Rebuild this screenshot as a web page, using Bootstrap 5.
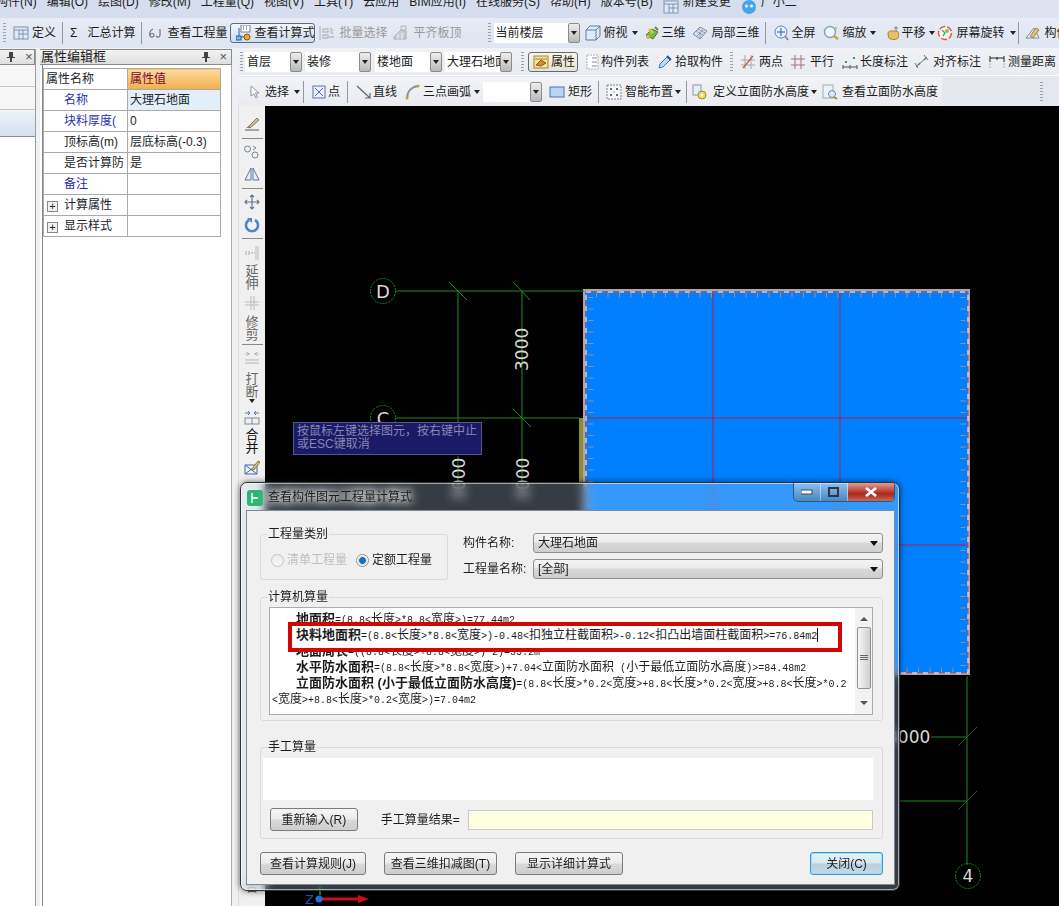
<!DOCTYPE html>
<html lang="zh-CN">
<head>
<meta charset="UTF-8">
<title>查看构件图元工程量计算式</title>
<link href="https://cdn.jsdelivr.net/npm/bootstrap@5.3.3/dist/css/bootstrap.min.css" rel="stylesheet">
<style>
html, body { height: 906px; overflow: hidden; margin: 0; }
body, .btn, .form-control { font-family: "Liberation Sans", "Noto Sans CJK SC", sans-serif; font-size: 12px; color: #1c1c1c; }
.app { position: relative; width: 1059px; height: 906px; overflow: hidden; background: #eef0f4; }
.ic { width: 16px; height: 16px; flex: none; display: block; }
.g1 { margin-left: 1px; } .g2 { margin-left: 2px; } .g3 { margin-left: 3px; } .g4 { margin-left: 4px; } .g5 { margin-left: 5px; }
.g6 { margin-left: 6px; } .g7 { margin-left: 7px; } .g8 { margin-left: 8px; } .g9 { margin-left: 9px; } .g10 { margin-left: 10px; } .g26 { margin-left: 26px; }
.t1 { margin-top: 1px; } .t3 { margin-top: 3px; } .t4 { margin-top: 4px; } .t5 { margin-top: 5px; } .t6 { margin-top: 6px; } .t7 { margin-top: 7px; } .t10 { margin-top: 10px; }

.menu-row { height: 18px; overflow: hidden; background: linear-gradient(90deg, #d6ddee 0, #d6ddee 800px, #dde3f0 800px); }
.menu-in { margin: -5px 0 0 -4px; gap: 10px; line-height: 14px; white-space: nowrap; }
.tool-row { display: flex; align-items: center; white-space: nowrap; overflow: hidden; line-height: 14px; }
.tool-one { height: 30px; background: linear-gradient(#e6ebf5, #dfe5f1); }
.grip { width: 3px; height: 20px; flex: none; background: repeating-linear-gradient(#9aa3b2 0 1px, transparent 1px 3px); }
.vsep { width: 1px; height: 22px; flex: none; background: #8e98a8; }
.caret-dn { width: 0; height: 0; flex: none; border: 3px solid transparent; border-top: 4px solid #222; border-bottom: 0; }
.off { color: #9a9a9a; }
.act-btn { display: flex; align-items: center; height: 20px; border: 1px solid #5c6b80; border-radius: 3px; background: linear-gradient(#f2f6fb, #cfdcec); flex: none; }
.calc-act { width: 85px; padding-left: 5px; }
.calc-act span { margin-left: 2px; }
.prop-act { width: 50px; padding-left: 4px; background: linear-gradient(#fdf5e4, #e8e3d2); }
.prop-act span { margin-left: 2px; }
.pick { display: flex; height: 20px; flex: none; align-items: stretch; }
.pick-txt { background: #fff; padding: 3px 0 0 2px; overflow: hidden; flex: 1; }
.pick-arr { width: 12px; flex: none; display: flex; align-items: center; justify-content: center; background: linear-gradient(#eee, #b8b8b8); border: 1px solid #8b8b8b; border-radius: 2px; }
.pk-floor { width: 86px; }
.pk57 { width: 57px; } .pk66 { width: 66px; } .pk67 { width: 67px; } .pk59 { width: 59px; }

.work { display: flex; height: 858px; }
.left-col { width: 238px; flex: none; display: flex; padding-top: 1px; background: #eef0f4; }
.pane-a { width: 36px; flex: none; background: #fff; border-right: 1px solid #9b9b9b; }
.pane-title { height: 16px; display: flex; align-items: center; background: linear-gradient(#f3f3f3, #dedede); border: 1px solid #8a8a8a; border-left: 0; }
.pane-title .ttl { font-size: 13px; padding-left: 1px; }
.pin { width: 8px; height: 10px; flex: none; }
.xmark { font-size: 13px; color: #555; line-height: 10px; }
.tree-r { height: 22px; border-bottom: 1px solid #c8c8c8; background: #f6f6f6; }
.tree-r + .tree-r { height: 23px; }
.tree-sel { height: 27px; border-bottom: 1px solid #8f8f8f; background: linear-gradient(#eef3fa, #d4e1f1); }
.pane-b { width: 192px; flex: none; margin-left: 4px; background: #fff; }
.pane-body { margin-left: 2px; padding-top: 3px; border-left: 1px solid #888; height: 842px; border-right: 1px solid #aaa; }
.prop-tb { width: 178px; margin: 0; table-layout: fixed; border-color: #a9a9a9; --bs-table-bg: transparent; }
.prop-tb .c-a { width: 84px; }
.prop-tb td { padding: 0 0 0 2px; height: 21px; vertical-align: middle; white-space: nowrap; overflow: hidden; border: 1px solid #a9a9a9; font-size: 12px; line-height: 14px; }
.prop-tb .nm { padding-left: 20px; }
.prop-tb .lnk { color: #1f2fb0; }
.prop-tb .hd-v { background: linear-gradient(#fbdc9f, #f3ad4b); color: #7a0a35; }
.prop-tb .cur { background: #e2effa; }
.prop-tb .ex { padding-left: 3px; height: 19px; }
.plus { display: inline-block; width: 11px; height: 11px; margin-right: 6px; vertical-align: -1px; border: 1px solid #888; text-align: center; line-height: 8px; font-size: 11px; background: #f2f2f2; }

.right-col { flex: 1; min-width: 0; display: flex; flex-direction: column; }
.tool-two { height: 28px; padding-top: 1px; background: linear-gradient(#f0f2f6, #e8ebf1); border-bottom: 1px solid #fff; }
.tool-three { height: 30px; padding-top: 1px; background: #e4e7ee; }
.band3 { display: flex; align-items: center; height: 100%; width: 704px; flex: none; background: linear-gradient(#f2f3f6, #e9ebf0); }
.view-row { flex: 1; display: flex; min-height: 0; }
.vert-tb { width: 27px; flex: none; display: flex; flex-direction: column; align-items: center; background: #f0f0f0; border-left: 1px solid #ddd; }
.vbar { width: 21px; height: 1px; flex: none; background: #8a8a8a; }
.vtxt { width: 14px; height: 26px; line-height: 13px; font-size: 13px; flex: none; text-align: center; color: #666; }
.vtxt.on { color: #111; }
.draw-wrap { flex: 1; background: #000; }
.draw-wrap svg { display: block; }

.float-tip { position: absolute; left: 293px; top: 422px; width: 189px; height: 33px; padding: 2px 3px; background: #1b1a66; border: 1px solid #55558f; color: #8787b4; font-size: 12px; line-height: 13px; white-space: nowrap; overflow: hidden; }

.dlg { position: absolute; left: 240px; top: 482px; width: 660px; height: 409px; padding: 0 4px 4px 5px; border: 1px solid #2e3338; border-radius: 7px; background: rgba(190, 215, 240, .28); backdrop-filter: blur(5px); box-shadow: inset 0 0 0 1px rgba(255, 255, 255, .55), 0 0 6px rgba(0, 0, 0, .6); }
.dlg-bar { height: 27px; display: flex; align-items: flex-start; }
.dlg-ttl { margin: 7px 0 0 5px; line-height: 14px; text-shadow: 0 0 6px #fff, 0 0 10px #fff, 0 0 14px #fff; }
.app-ic { width: 16px; height: 16px; margin: 7px 0 0 1px; flex: none; }
.cap-box { margin-left: auto; display: flex; height: 19px; border: 1px solid rgba(40, 60, 80, .7); border-top: 0; border-radius: 0 0 5px 5px; overflow: hidden; }
.cap-b { display: flex; align-items: center; justify-content: center; border-right: 1px solid rgba(255, 255, 255, .45); background: linear-gradient(rgba(210, 225, 240, .55), rgba(90, 120, 150, .55)); }
.cap-min, .cap-max { width: 27px; }
.cap-x { width: 46px; border-right: 0; background: linear-gradient(#dd9e94, #b93c2c 50%, #a8281a 60%, #c66a5a); }
.dlg-body { height: 375px; background: #f0f0f0; border: 1px solid #7d8a97; padding: 16px 11px 0 13px; }
.dlg-group { border: 1px solid #dadada; border-radius: 3px; margin: 0; min-width: 0; }
.dlg-group legend { float: none; width: auto; padding: 0 1px; font-size: 12px; line-height: 14px; margin-bottom: 0; }
.grp-kind { width: 188px; height: 53px; padding: 10px 0 0 10px; flex: none; }
.grp-kind legend { margin-left: -4px; }
.rd { display: flex; align-items: center; margin: 0; padding: 0; min-height: 0; }
.rd .form-check-input { width: 13px; height: 13px; margin: 0; float: none; border-color: #8e8f8f; background: linear-gradient(#e9e9e9, #fff); }
.rd .form-check-input:checked { background: radial-gradient(circle, #1f6fb8 0 3px, #9fc7e6 3.5px, #fff 5px); }
.rd .form-check-input:disabled { opacity: .45; }
.rd label { margin-left: 3px; opacity: 1; }
.rd-b { margin-left: 9px; }
.rd-off { color: #8c8c8c; }
.kind-side { margin-left: 15px; padding-top: 6px; flex: 1; }
.side-row { display: flex; align-items: center; height: 20px; }
.side-row + .side-row { margin-top: 6px; }
.side-lab { width: 70px; flex: none; }
.combo { flex: 1; height: 20px; padding: 0 4px; display: flex; align-items: center; justify-content: space-between; border: 1px solid #8e8f8f; border-radius: 3px; background: linear-gradient(#f4f4f4 0, #ebebeb 45%, #d8d8d8 50%, #cfcfcf); }
.combo.dropdown-toggle::after { margin: 0; border-top-color: #111; border-width: 5px 4px 0; }
.combo:hover, .combo:active { background: linear-gradient(#f4f4f4, #cfcfcf); border-color: #8e8f8f; }
.grp-calc { height: 131px; margin-top: 10px; padding: 3px 9px 0 8px; }
.grp-calc legend { margin-left: -2px; }
.calc-box { height: 108px; display: flex; border: 1px solid #acacac; background: #fff; }
.calc-txt { flex: 1; min-width: 0; padding: 3px 0 0 2px; font-size: 12px; line-height: 16px; white-space: nowrap; overflow: hidden; }
.calc-ln { padding-left: 24px; height: 16px; }
.calc-ln b { font-size: 13px; font-weight: 700; }
.calc-hl { position: relative; z-index: 1; }
.calc-hl::before { content: ""; position: absolute; z-index: -1; left: 16px; right: 13px; top: -5px; bottom: -9px; background: #fff; border: 4px solid #d40505; }
.asc { font-family: "Liberation Mono", monospace; font-size: 10px; }
.cursor-bar { display: inline-block; width: 1px; height: 14px; background: #111; vertical-align: -3px; }
.sbar { width: 17px; flex: none; display: flex; flex-direction: column; align-items: center; background: #f2f2f2; }
.sb-thumb { width: 14px; height: 62px; display: flex; align-items: center; justify-content: center; border: 1px solid #929292; border-radius: 2px; background: linear-gradient(90deg, #f6f6f6, #cfcfcf); }
.sb-up { margin-top: 9px; width: 0; height: 0; border: 4px solid transparent; border-bottom: 4px solid #555; border-top: 0; }
.sb-dn { margin-top: 12px; width: 0; height: 0; border: 4px solid transparent; border-top: 4px solid #555; border-bottom: 0; }
.sb-sp { height: 6px; }
.grp-man { height: 99px; margin-top: 19px; padding: 4px 9px 0 2px; }
.grp-man legend { margin-left: 4px; }
.man-box { height: 42px; width: 610px; padding: 0; border: 0; border-radius: 0; background: #fff; resize: none; }
.man-row { display: flex; align-items: center; margin-top: 8px; height: 23px; padding-left: 7px; }
.win-btn { height: 23px; padding: 0; border: 1px solid #7b7b7b; border-radius: 3px; background: linear-gradient(#f4f4f4, #ececec 48%, #d9d9d9 52%, #cdcdcd); color: #1c1c1c; font-size: 12px; line-height: 20px; white-space: nowrap; }
.btn-retype { width: 88px; }
.man-lab { margin-left: 23px; width: 87px; flex: none; }
.man-res { width: 406px; height: 20px; padding: 0; border: 1px solid #c8c8c8; border-radius: 0; background: #ffffe1; }
.foot-row { display: flex; margin-top: 13px; }
.btn-a { width: 106px; }
.btn-b { width: 113px; margin-left: 18px; }
.btn-c { width: 108px; margin-left: 18px; }
.btn-shut { width: 73px; margin-left: auto; border-color: #3c9ac9; background: linear-gradient(#e4f2fa, #d5e8f4 48%, #b9cfdd 52%, #c5dae7); box-shadow: inset 0 0 0 1px #9adcf3; }
</style>
</head>
<body>
<svg width="0" height="0" class="position-absolute">
  <symbol id="i-def" viewBox="0 0 16 16"><rect x="1" y="2" width="14" height="12" fill="#dfe8f5" stroke="#7f93b4"/><path d="M1 5h14M6 5v9M10 5v9M6 9h9" stroke="#7f93b4" fill="none"/></symbol>
  <symbol id="i-qty" viewBox="0 0 16 16"><path d="M6 4C3 5 2 9 3 11c1 2 4 1 4-1S4 8 3 10M13 4v6c0 2-2 3-4 1" fill="none" stroke="#6a7484" stroke-width="1.2"/></symbol>
  <symbol id="i-calc" viewBox="0 0 16 16"><rect x="5" y="0" width="9" height="7" fill="#fff" stroke="#6c7f9a"/><path d="M7 2h1M10 2h1M7 4h1M10 4h1" stroke="#456"/><path d="M3 3v9h5" fill="none" stroke="#2c5fa8"/><rect x="0" y="11" width="5" height="4" fill="#8ab4e8" stroke="#2c5fa8"/><circle cx="11" cy="12" r="3" fill="#e9a832" stroke="#8a5a10"/></symbol>
  <symbol id="i-batch" viewBox="0 0 16 16"><path d="M1 1v14M4 4h5v3H4zM4 10h5v3H4zM11 3l3 3M11 6l3 3M10 12h5" fill="none" stroke="#b9bcc2" stroke-width="1.3"/></symbol>
  <symbol id="i-flush" viewBox="0 0 16 16"><path d="M2 12l7-7 5 1v8H2z" fill="#c9ccd0" stroke="#a9acb2"/><path d="M9 1h5v4H9z" fill="#e3e4e6" stroke="#b5b7bb"/><path d="M6 9v5M10 8v6" stroke="#f4f4f4"/></symbol>
  <symbol id="i-cube" viewBox="0 0 16 16"><path d="M1 5l4-4h10v10l-4 4H1z" fill="#dcebf7" stroke="#5f7f9c"/><path d="M1 5h10v10M11 5l4-4" fill="none" stroke="#5f7f9c"/></symbol>
  <symbol id="i-3d" viewBox="0 0 16 16"><path d="M2 10l6-6 6 3-5 7z" fill="#7ab648" stroke="#4c7a2a"/><path d="M5 4l4 4" stroke="#e4c13a" stroke-width="3"/><path d="M11 2l3 3" stroke="#5c8c3a" stroke-width="2"/><circle cx="4" cy="12" r="2" fill="#dab13c"/></symbol>
  <symbol id="i-local" viewBox="0 0 16 16"><path d="M1 9l7-7 7 4-7 8z" fill="#d5e0ec" stroke="#7a8da3"/><path d="M4 6l7 4M6 4l7 4M8 14V8M5 11l6-6" stroke="#7a8da3" fill="none" stroke-width=".8"/></symbol>
  <symbol id="i-full" viewBox="0 0 16 16"><circle cx="8" cy="7" r="6" fill="#e2eefb" stroke="#5b86bb"/><path d="M8 3v8M4 7h8" stroke="#2c5fa8"/><path d="M12 11l3 4" stroke="#8a8f99" stroke-width="2"/></symbol>
  <symbol id="i-zoom" viewBox="0 0 16 16"><circle cx="7" cy="7" r="5.5" fill="#eef5fc" stroke="#7f9fc2" stroke-width="1.4"/><path d="M11 11l4 3" stroke="#d3a032" stroke-width="2.4"/><path d="M12 2l2 2" stroke="#e0b040" stroke-width="1.4"/></symbol>
  <symbol id="i-pan" viewBox="0 0 16 16"><path d="M3 9c0-3 2-3 3-3l6 0c2 1 2 4 1 7-1 2-7 2-9 0z" fill="#e8c06a" stroke="#a9812c"/><path d="M11 1v5M9 3h4" stroke="#7c8a9a"/></symbol>
  <symbol id="i-rot" viewBox="0 0 16 16"><circle cx="8" cy="8" r="6.5" fill="#fdf6e0" stroke="#d9534a" stroke-width="1.4" stroke-dasharray="6 2"/><path d="M5 5l3 3-2 3" stroke="#3da0c8" fill="none" stroke-width="1.4"/><circle cx="10" cy="6" r="2" fill="#8cc152"/></symbol>
  <symbol id="i-comp" viewBox="0 0 16 16"><path d="M1 13L9 3l5 10z" fill="#eef2f6" stroke="#808a96"/><path d="M5 11l6-8 3 2-6 8z" fill="#d8c27a" stroke="#9a8a4a"/></symbol>
  <symbol id="i-prop" viewBox="0 0 16 16"><rect x="1" y="2" width="14" height="12" fill="#f7e3a6" stroke="#a3803c"/><path d="M3 11l5-5 5 3-5 3z" fill="#d98a2a" stroke="#8f5a14"/><path d="M2 5h12" stroke="#a3803c"/></symbol>
  <symbol id="i-list" viewBox="0 0 16 16"><rect x="2" y="1" width="11" height="14" fill="#fff" stroke="#aab2be" stroke-dasharray="2 1"/><path d="M7 4h5M7 8h5M7 12h5" stroke="#7e8da0"/></symbol>
  <symbol id="i-pick" viewBox="0 0 16 16"><path d="M2 14l1-4 7-7 3 3-7 7z" fill="#bcdcf5" stroke="#3c78b4"/><path d="M10 2l4 4" stroke="#2a5a96" stroke-width="2"/></symbol>
  <symbol id="i-two" viewBox="0 0 16 16"><path d="M1 11h14M1 6h14M5 1v14M11 1v14" stroke="#a4a9b0"/><path d="M3 14L13 2" stroke="#c9573f" stroke-width="1.2"/></symbol>
  <symbol id="i-par" viewBox="0 0 16 16"><path d="M1 5h14M1 11h14M5 1v14M11 1v14" stroke="#a0707a"/></symbol>
  <symbol id="i-len" viewBox="0 0 16 16"><path d="M1 13h14M1 11v4M8 11v4M15 11v4" stroke="#4b5563"/><path d="M3 8h2M11 4h2" stroke="#3f9a4a" stroke-width="2"/></symbol>
  <symbol id="i-align" viewBox="0 0 16 16"><path d="M2 13L13 3M1 9l3 5M10 1l4 5" stroke="#6a7382" fill="none"/><path d="M4 11l2-2M10 6l2-2" stroke="#3f9a4a" stroke-width="1.5"/></symbol>
  <symbol id="i-meas" viewBox="0 0 16 16"><path d="M1 4h14M1 2v6M15 2v6M8 3v3" stroke="#222" fill="none"/><path d="M1 9v6M15 9v6" stroke="#aaa" stroke-dasharray="2 1"/></symbol>
  <symbol id="i-sel" viewBox="0 0 16 16"><path d="M3 2v10l3-2 2 4 1.500-1-2-4h3.500z" fill="#fff" stroke="#8b95a3"/></symbol>
  <symbol id="i-pt" viewBox="0 0 16 16"><rect x="2" y="2" width="12" height="12" fill="#eaf0fa" stroke="#5e6fa8"/><path d="M4 4l8 8M12 4l-8 8" stroke="#5e6fa8"/></symbol>
  <symbol id="i-line" viewBox="0 0 16 16"><path d="M1 2l13 12M14 9v5H9" fill="none" stroke="#56697f" stroke-width="1.2"/></symbol>
  <symbol id="i-arc" viewBox="0 0 16 16"><path d="M3 15C3 8 7 3 14 2" fill="none" stroke="#8a919b" stroke-width="2"/><circle cx="3" cy="14" r="1.500" fill="#c9a13c"/><circle cx="14" cy="2" r="1.500" fill="#c9a13c"/></symbol>
  <symbol id="i-rect" viewBox="0 0 16 16"><rect x="1" y="3" width="14" height="10" fill="#b9d3f3" stroke="#4a76b0"/></symbol>
  <symbol id="i-smart" viewBox="0 0 16 16"><rect x="1" y="1" width="14" height="14" fill="#f8f8f8" stroke="#7a828e" stroke-dasharray="2 1"/><path d="M4 4h2v2H4zM10 4h2v2h-2zM4 10h2v2H4zM10 10h2v2h-2z" fill="#5a6e88"/><path d="M8 7v2" stroke="#d9a032"/></symbol>
  <symbol id="i-defh" viewBox="0 0 16 16"><rect x="1" y="1" width="8" height="10" fill="#e8eef6" stroke="#8797ad"/><circle cx="10" cy="11" r="4" fill="#f4d765" stroke="#a98d20"/><circle cx="10" cy="11" r="1.500" fill="#fff"/></symbol>
  <symbol id="i-viewh" viewBox="0 0 16 16"><rect x="1" y="1" width="10" height="13" fill="#eef2f7" stroke="#9ea9b6"/><circle cx="10" cy="10" r="3.500" fill="#dbe9f7" stroke="#6d87a6"/><path d="M12 13l3 2" stroke="#b58d30" stroke-width="2"/></symbol>
  <symbol id="i-brush" viewBox="0 0 16 16"><path d="M4 11L13 2l2 2-9 8z" fill="#d8c27a" stroke="#777"/><path d="M1 14h14" stroke="#5a5a5a"/><path d="M2 12l3-2 2 2z" fill="#777"/></symbol>
  <symbol id="i-circ" viewBox="0 0 16 16"><circle cx="3.500" cy="5" r="3" fill="none" stroke="#7a8494"/><circle cx="11" cy="11" r="3" fill="none" stroke="#7a8494"/><path d="M9 2l3 2-3 2" fill="none" stroke="#7a8494"/></symbol>
  <symbol id="i-mir" viewBox="0 0 16 16"><path d="M7 2L1 14h6zM9 2l6 12H9z" fill="#e9eff7" stroke="#5a78a0"/></symbol>
  <symbol id="i-move" viewBox="0 0 16 16"><path d="M8 1v14M1 8h14M6 3l2-2 2 2M6 13l2 2 2-2M3 6L1 8l2 2M13 6l2 2-2 2" fill="none" stroke="#5e7896" stroke-width="1.2"/></symbol>
  <symbol id="i-turn" viewBox="0 0 16 16"><path d="M5 3a6 6 0 1 0 6 0" fill="none" stroke="#4f86c6" stroke-width="2.6"/><path d="M3 1h5v5z" fill="#4f86c6"/></symbol>
  <symbol id="i-ext" viewBox="0 0 16 16"><path d="M12 1v14M14 1v14" stroke="#bbb"/><path d="M1 7h5M1 9h5M7 8h4" stroke="#aaa" stroke-dasharray="2 1"/></symbol>
  <symbol id="i-trim" viewBox="0 0 16 16"><path d="M7 1v14M10 1v14" stroke="#bbb"/><path d="M1 7h14M1 10h14" stroke="#bbb"/></symbol>
  <symbol id="i-brk" viewBox="0 0 16 16"><path d="M1 5h5M10 5h5M1 11h14M3 3l2 2-2 2M13 3l-2 2 2 2M1 14h14" fill="none" stroke="#aeb4bb"/></symbol>
  <symbol id="i-mrg" viewBox="0 0 16 16"><path d="M1 4h5M10 4h5M4 2l2 2-2 2M12 2l-2 2 2 2" fill="none" stroke="#4f78ad"/><rect x="1" y="9" width="14" height="6" fill="none" stroke="#7f8a99"/><path d="M8 9v6" stroke="#7f8a99"/></symbol>
  <symbol id="i-edit" viewBox="0 0 16 16"><path d="M1 5h12v9H1zM1 5l12 9M1 14L13 5" fill="none" stroke="#3e68a8"/><path d="M8 9l6-8 2 1-6 8z" fill="#d8c27a" stroke="#8f7a3a"/></symbol>
</svg>

<div class="app">
  <div class="menu-row">
    <div class="d-flex menu-in">
      <span>构件(N)</span><span>编辑(O)</span><span>绘图(D)</span><span>修改(M)</span><span>工程量(Q)</span><span>视图(V)</span><span>工具(T)</span><span>云应用</span><span>BIM应用(I)</span><span>在线服务(S)</span><span>帮助(H)</span><span>版本号(B)</span>
      <span class="d-flex"><svg class="ic mt-1"><use href="#i-def"/></svg><span class="g4">新建变更</span></span>
      <span class="d-flex"><svg class="ic mt-1" viewBox="0 0 16 16"><circle cx="8" cy="8" r="7" fill="#4aa3e8"/><circle cx="5.500" cy="7" r="1.500" fill="#fff"/><circle cx="10.500" cy="7" r="1.500" fill="#fff"/></svg><span class="g4">广小二</span></span>
    </div>
  </div>

  <div class="tool-row tool-one">
    <i class="grip g3"></i>
    <svg class="ic g7"><use href="#i-def"/></svg><span class="g3">定义</span>
    <i class="vsep g6"></i>
    <span class="g7">Σ</span><span class="g10">汇总计算</span>
    <i class="vsep g6"></i>
    <svg class="ic g5"><use href="#i-qty"/></svg><span class="g4">查看工程量</span>
    <div class="act-btn calc-act g3"><svg class="ic"><use href="#i-calc"/></svg><span>查看计算式</span></div>
    <svg class="ic g4"><use href="#i-batch"/></svg><span class="g4 off">批量选择</span>
    <svg class="ic g5"><use href="#i-flush"/></svg><span class="g5 off">平齐板顶</span>
    <i class="grip g26"></i>
    <div class="pick pk-floor g3"><span class="pick-txt">当前楼层</span><span class="pick-arr"><i class="caret-dn"></i></span></div>
    <svg class="ic g5"><use href="#i-cube"/></svg><span class="g3">俯视</span><i class="caret-dn g4"></i>
    <svg class="ic g6"><use href="#i-3d"/></svg><span class="g2">三维</span>
    <svg class="ic g6"><use href="#i-local"/></svg><span class="g4">局部三维</span>
    <i class="vsep g5"></i>
    <svg class="ic g7"><use href="#i-full"/></svg><span class="g3">全屏</span>
    <svg class="ic g7"><use href="#i-zoom"/></svg><span class="g4">缩放</span><i class="caret-dn g3"></i>
    <svg class="ic g9"><use href="#i-pan"/></svg><span class="g1">平移</span><i class="caret-dn g3"></i>
    <svg class="ic g2"><use href="#i-rot"/></svg><span class="g4">屏幕旋转</span><i class="caret-dn g5"></i>
    <i class="vsep g2"></i>
    <svg class="ic g6"><use href="#i-comp"/></svg><span class="g4">构件</span>
  </div>

  <div class="work">
    <div class="left-col">
      <div class="pane-a">
        <div class="pane-title">
          <svg class="pin g7" viewBox="0 0 8 10"><path d="M2 0h4v5h2v1H5v4H3V6H0V5h2z" fill="#444"/></svg>
          <span class="xmark g10">×</span>
        </div>
        <div class="tree-r"></div>
        <div class="tree-r"></div>
        <div class="tree-sel"></div>
      </div>
      <div class="pane-b">
        <div class="pane-title">
          <span class="ttl">属性编辑框</span>
          <svg class="pin ms-auto" viewBox="0 0 8 10"><path d="M2 0h4v5h2v1H5v4H3V6H0V5h2z" fill="#444"/></svg>
          <span class="xmark g9 me-1">×</span>
        </div>
        <div class="pane-body">
          <table class="table prop-tb">
            <colgroup><col class="c-a"><col></colgroup>
            <tr><td>属性名称</td><td class="hd-v">属性值</td></tr>
            <tr><td class="nm lnk">名称</td><td class="cur">大理石地面</td></tr>
            <tr><td class="nm lnk">块料厚度(</td><td>0</td></tr>
            <tr><td class="nm">顶标高(m)</td><td>层底标高(-0.3)</td></tr>
            <tr><td class="nm">是否计算防</td><td>是</td></tr>
            <tr><td class="nm lnk">备注</td><td></td></tr>
            <tr><td class="ex"><span class="plus">+</span>计算属性</td><td></td></tr>
            <tr><td class="ex"><span class="plus">+</span>显示样式</td><td></td></tr>
          </table>
        </div>
      </div>
    </div>

    <div class="right-col">
      <div class="tool-row tool-two">
        <i class="grip g2"></i>
        <div class="pick pk57 g2"><span class="pick-txt">首层</span><span class="pick-arr"><i class="caret-dn"></i></span></div>
        <div class="pick pk66 g3"><span class="pick-txt">装修</span><span class="pick-arr"><i class="caret-dn"></i></span></div>
        <div class="pick pk67 g4"><span class="pick-txt">楼地面</span><span class="pick-arr"><i class="caret-dn"></i></span></div>
        <div class="pick pk67 g3"><span class="pick-txt">大理石地面</span><span class="pick-arr"><i class="caret-dn"></i></span></div>
        <i class="grip g9"></i>
        <div class="act-btn prop-act g4"><svg class="ic"><use href="#i-prop"/></svg><span>属性</span></div>
        <svg class="ic g7"><use href="#i-list"/></svg><span>构件列表</span>
        <svg class="ic g8"><use href="#i-pick"/></svg><span class="g2">拾取构件</span>
        <i class="grip g7"></i>
        <svg class="ic g7"><use href="#i-two"/></svg><span class="g3">两点</span>
        <svg class="ic g7"><use href="#i-par"/></svg><span class="g4">平行</span>
        <svg class="ic g8"><use href="#i-len"/></svg><span class="g2">长度标注</span>
        <svg class="ic g6"><use href="#i-align"/></svg><span class="g3">对齐标注</span>
        <svg class="ic g8"><use href="#i-meas"/></svg><span class="g3">测量距离</span>
      </div>
      <div class="tool-row tool-three">
        <div class="band3">
          <svg class="ic g10"><use href="#i-sel"/></svg><span class="g1">选择</span><i class="caret-dn g5"></i>
          <i class="vsep g3"></i>
          <svg class="ic g7"><use href="#i-pt"/></svg><span class="g1">点</span>
          <i class="vsep g7"></i>
          <svg class="ic g8"><use href="#i-line"/></svg><span class="g1">直线</span>
          <svg class="ic g7"><use href="#i-arc"/></svg><span class="g3">三点画弧</span><i class="caret-dn g3"></i>
          <div class="pick pk59 g3"><span class="pick-txt"></span><span class="pick-arr"><i class="caret-dn"></i></span></div>
          <svg class="ic g7"><use href="#i-rect"/></svg><span class="g3">矩形</span>
          <i class="vsep g6"></i>
          <svg class="ic g7"><use href="#i-smart"/></svg><span class="g3">智能布置</span><i class="caret-dn g2"></i>
          <i class="vsep g5"></i>
          <svg class="ic g5"><use href="#i-defh"/></svg><span class="g5">定义立面防水高度</span><i class="caret-dn g2"></i>
          <svg class="ic g5"><use href="#i-viewh"/></svg><span class="g4">查看立面防水高度</span>
        </div>
        <i class="grip ms-auto me-3"></i>
      </div>
      <div class="view-row">
        <div class="vert-tb">
          <svg class="ic t10"><use href="#i-brush"/></svg>
          <i class="vbar t6"></i>
          <svg class="ic t5"><use href="#i-circ"/></svg>
          <svg class="ic t6"><use href="#i-mir"/></svg>
          <i class="vbar t6"></i>
          <svg class="ic t5"><use href="#i-move"/></svg>
          <svg class="ic t7"><use href="#i-turn"/></svg>
          <i class="vbar t5"></i>
          <svg class="ic t6"><use href="#i-ext"/></svg>
          <span class="vtxt t3">延伸</span>
          <svg class="ic t5"><use href="#i-trim"/></svg>
          <span class="vtxt t4">修剪</span>
          <i class="vbar t3"></i>
          <svg class="ic t4"><use href="#i-brk"/></svg>
          <span class="vtxt t7">打断</span>
          <i class="caret-dn t1"></i>
          <svg class="ic t6"><use href="#i-mrg"/></svg>
          <span class="vtxt on t3">合并</span>
          <svg class="ic t6"><use href="#i-edit"/></svg>
          <span class="vtxt mt-auto">合</span>
        </div>
        <div class="draw-wrap">
          <svg width="794" height="800" viewBox="265 106 794 800" font-family="DejaVu Sans, sans-serif">
            <rect x="585" y="291" width="384" height="382" fill="#0080ff"/>
            <path d="M713 291v382M840 291v382M587 418h381M587 545h381" stroke="#b0203c" stroke-width="1"/>
            <rect x="584" y="290" width="385" height="384" fill="none" stroke="#a9a9a9" stroke-width="2"/>
            <path d="M586 292h382v381H586z" fill="none" stroke="#e04848"/>
            <path d="M586 292h382v381H586z" fill="none" stroke="#fff" stroke-dasharray="5 6"/>
            <path d="M591 297v372M963 297v372M596 295h362M596 670h362" fill="none" stroke="#9c8f8f" stroke-width="5" stroke-dasharray="1 10.500"/>
            <path d="M581 418v66" stroke="#8c8c2c" stroke-width="4"/>
            <g stroke="#1f8a1f" fill="none">
              <path d="M396 291h188M396 418h184M458 291v131M522 291v195M458 456v30"/>
              <path d="M449 282l18 18M513 282l17 18M513 409l18 18M967 676v189M931 737h36M900 801h67"/>
              <path d="M958 746l19-19M958 810l19-19" stroke="#176417"/>
              <circle cx="383" cy="291" r="12.500" stroke-dasharray="2 1"/>
              <circle cx="383" cy="418" r="12.500" stroke-dasharray="2 1"/>
              <circle cx="968" cy="876" r="12.500" stroke-dasharray="2 1"/>
            </g>
            <g fill="#d8d8d8" font-size="17">
              <text x="383" y="298" text-anchor="middle" font-size="18">D</text>
              <text x="383" y="425" text-anchor="middle" font-size="18">C</text>
              <text x="968" y="882" text-anchor="middle">4</text>
              <text transform="translate(528 371) rotate(-90)">3000</text>
              <text transform="translate(465 501) rotate(-90)">3000</text>
              <text transform="translate(529 501) rotate(-90)">3000</text>
              <text x="887" y="743">3000</text>
            </g>
            <path d="M322 899h40" stroke="#d01010" stroke-width="3"/>
            <path d="M358 895l11 4-11 4z" fill="#d01010"/>
            <path d="M320 885v10" stroke="#1f8a1f" stroke-width="2"/>
            <circle cx="319" cy="899" r="3.500" fill="#1f6fe0"/>
            <text x="305" y="904" fill="#2a4ea8" font-size="13">Z</text>
          </svg>
        </div>
      </div>
    </div>
  </div>

  <div class="float-tip">按鼠标左键选择图元，按右键中止<br>或ESC键取消</div>

  <div class="dlg">
    <div class="dlg-bar">
      <svg class="app-ic" viewBox="0 0 16 16"><rect x="0" y="0" width="16" height="16" rx="3" fill="#2bb673"/><path d="M5 3v10M5 8h6" stroke="#fff" stroke-width="1.600" fill="none"/></svg>
      <span class="dlg-ttl">查看构件图元工程量计算式</span>
      <div class="cap-box">
        <div class="cap-b cap-min"><svg width="12" height="6"><rect x="0" y="1" width="11" height="4" fill="#fff" stroke="#445"/></svg></div>
        <div class="cap-b cap-max"><svg width="12" height="10"><rect x="1" y="1" width="9" height="8" fill="none" stroke="#334" stroke-width="2"/></svg></div>
        <div class="cap-b cap-x"><svg width="14" height="10"><path d="M2 1l10 8M12 1L2 9" stroke="#fff" stroke-width="2.600"/></svg></div>
      </div>
    </div>
    <div class="dlg-body">
      <div class="d-flex">
        <fieldset class="dlg-group grp-kind">
          <legend>工程量类别</legend>
          <div class="d-flex">
            <div class="rd form-check"><input class="form-check-input" type="radio" name="kind" id="k1" disabled><label class="form-check-label rd-off" for="k1">清单工程量</label></div>
            <div class="rd rd-b form-check"><input class="form-check-input" type="radio" name="kind" id="k2" checked><label class="form-check-label" for="k2">定额工程量</label></div>
          </div>
        </fieldset>
        <div class="kind-side">
          <div class="side-row"><span class="side-lab">构件名称:</span><button type="button" class="btn combo dropdown-toggle">大理石地面</button></div>
          <div class="side-row"><span class="side-lab">工程量名称:</span><button type="button" class="btn combo dropdown-toggle">[全部]</button></div>
        </div>
      </div>

      <fieldset class="dlg-group grp-calc">
        <legend>计算机算量</legend>
        <div class="calc-box">
          <div class="calc-txt">
            <div class="calc-ln"><b>地面积</b><span class="asc">=(8.8&lt;</span>长度<span class="asc">&gt;*8.8&lt;</span>宽度<span class="asc">&gt;)=77.44m2</span></div>
            <div class="calc-ln calc-hl"><b>块料地面积</b><span class="asc">=(8.8&lt;</span>长度<span class="asc">&gt;*8.8&lt;</span>宽度<span class="asc">&gt;)-0.48&lt;</span>扣独立柱截面积<span class="asc">&gt;-0.12&lt;</span>扣凸出墙面柱截面积<span class="asc">&gt;=76.84m2</span><i class="cursor-bar"></i></div>
            <div class="calc-ln"><b>地面周长</b><span class="asc">=((8.8&lt;</span>长度<span class="asc">&gt;+8.8&lt;</span>宽度<span class="asc">&gt;)*2)=35.2m</span></div>
            <div class="calc-ln"><b>水平防水面积</b><span class="asc">=(8.8&lt;</span>长度<span class="asc">&gt;*8.8&lt;</span>宽度<span class="asc">&gt;)+7.04&lt;</span>立面防水面积<span class="asc"> (</span>小于最低立面防水高度<span class="asc">)&gt;=84.48m2</span></div>
            <div class="calc-ln"><b>立面防水面积 (小于最低立面防水高度)</b><span class="asc">=(8.8&lt;</span>长度<span class="asc">&gt;*0.2&lt;</span>宽度<span class="asc">&gt;+8.8&lt;</span>长度<span class="asc">&gt;*0.2&lt;</span>宽度<span class="asc">&gt;+8.8&lt;</span>长度<span class="asc">&gt;*0.2</span></div>
            <div><span class="asc">&lt;</span>宽度<span class="asc">&gt;+8.8&lt;</span>长度<span class="asc">&gt;*0.2&lt;</span>宽度<span class="asc">&gt;)=7.04m2</span></div>
          </div>
          <div class="sbar">
            <i class="sb-up"></i><i class="sb-sp"></i>
            <div class="sb-thumb"><svg width="8" height="6"><path d="M0 .5h8M0 2.500h8M0 4.500h8" stroke="#666"/></svg></div>
            <i class="sb-dn"></i>
          </div>
        </div>
      </fieldset>

      <fieldset class="dlg-group grp-man">
        <legend>手工算量</legend>
        <textarea class="form-control man-box" aria-label="手工算量"></textarea>
        <div class="man-row">
          <button type="button" class="btn win-btn btn-retype">重新输入(R)</button>
          <span class="man-lab">手工算量结果=</span>
          <input class="form-control man-res" aria-label="手工算量结果" readonly>
        </div>
      </fieldset>

      <div class="foot-row">
        <button type="button" class="btn win-btn btn-a">查看计算规则(J)</button>
        <button type="button" class="btn win-btn btn-b">查看三维扣减图(T)</button>
        <button type="button" class="btn win-btn btn-c">显示详细计算式</button>
        <button type="button" class="btn win-btn btn-shut">关闭(C)</button>
      </div>
    </div>
  </div>
</div>
<script src="https://cdn.jsdelivr.net/npm/bootstrap@5.3.3/dist/js/bootstrap.bundle.min.js"></script>
</body>
</html>
